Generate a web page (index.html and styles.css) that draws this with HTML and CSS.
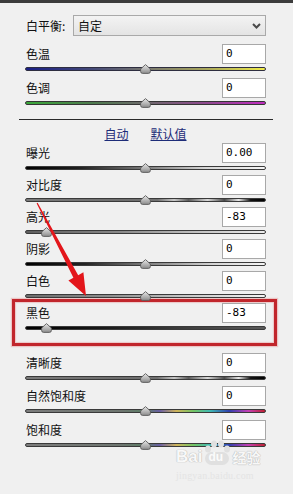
FILE: index.html
```html
<!DOCTYPE html>
<html lang="zh-CN">
<head>
<meta charset="utf-8">
<title>基本</title>
<link rel="stylesheet" href="styles.css">
</head>
<body>
<svg class="defs" width="0" height="0" aria-hidden="true">
  <defs>
    <linearGradient id="tg" x1="0" y1="0" x2="0" y2="1">
      <stop offset="0" stop-color="#e8e8e8"/>
      <stop offset="1" stop-color="#8c8c8c"/>
    </linearGradient>
    <symbol id="thumb" viewBox="0 0 11 10">
      <path d="M5.5 0.6 L10.4 5 V7.4 Q10.4 9.4 8.4 9.4 H2.6 Q0.6 9.4 0.6 7.4 V5 Z" fill="url(#tg)" stroke="#5a5a5a" stroke-width="0.9"/>
    </symbol>
  </defs>
</svg>
<div class="panel">
  <div class="topbar"></div>
  <div class="content">
    <div class="wb">
      <span class="wb-label">白平衡:</span>
      <div class="select">
        <span>自定</span>
        <svg class="chev" width="9" height="6" viewBox="0 0 9 6"><path d="M1 1 L4.5 4.5 L8 1" fill="none" stroke="#4a4a4a" stroke-width="2"/></svg>
      </div>
    </div>

    <div class="row first">
      <div class="head"><span class="label">色温</span><span class="input">0</span></div>
      <div class="track t-temp"><svg class="thumb" style="left:50%"><use href="#thumb"/></svg></div>
    </div>
    <div class="row wide">
      <div class="head"><span class="label">色调</span><span class="input">0</span></div>
      <div class="track t-tint"><svg class="thumb" style="left:50%"><use href="#thumb"/></svg></div>
    </div>

    <div class="sep"></div>
    <div class="links"><a>自动</a><a>默认值</a></div>

    <div class="row tight">
      <div class="head"><span class="label">曝光</span><span class="input">0.00</span></div>
      <div class="track t-exp"><svg class="thumb" style="left:50%"><use href="#thumb"/></svg></div>
    </div>
    <div class="row">
      <div class="head"><span class="label">对比度</span><span class="input">0</span></div>
      <div class="track t-con"><svg class="thumb" style="left:50%"><use href="#thumb"/></svg></div>
    </div>
    <div class="row">
      <div class="head"><span class="label">高光</span><span class="input">-83</span></div>
      <div class="track t-hi"><svg class="thumb" style="left:8.5%"><use href="#thumb"/></svg></div>
    </div>
    <div class="row">
      <div class="head"><span class="label">阴影</span><span class="input">0</span></div>
      <div class="track t-sh"><svg class="thumb" style="left:50%"><use href="#thumb"/></svg></div>
    </div>
    <div class="row">
      <div class="head"><span class="label">白色</span><span class="input">0</span></div>
      <div class="track t-wh"><svg class="thumb" style="left:50%"><use href="#thumb"/></svg></div>
    </div>

    <div class="hl">
      <div class="row flush">
        <div class="head"><span class="label">黑色</span><span class="input">-83</span></div>
        <div class="track t-bl"><svg class="thumb" style="left:8.5%"><use href="#thumb"/></svg></div>
      </div>
    </div>

    <div class="row after">
      <div class="head"><span class="label">清晰度</span><span class="input">0</span></div>
      <div class="track t-con"><svg class="thumb" style="left:50%"><use href="#thumb"/></svg></div>
    </div>
    <div class="row mid">
      <div class="head"><span class="label">自然饱和度</span><span class="input">0</span></div>
      <div class="track t-vib"><svg class="thumb" style="left:50%"><use href="#thumb"/></svg></div>
    </div>
    <div class="row after">
      <div class="head"><span class="label">饱和度</span><span class="input">0</span></div>
      <div class="track t-sat"><svg class="thumb" style="left:50%"><use href="#thumb"/></svg></div>
    </div>
  </div>

  <svg class="arrow" width="293" height="494" viewBox="0 0 293 494" aria-hidden="true">
    <polygon points="36.6,203.2 37.6,202.8 78.2,275.2 83.4,272.2 86,296 68.4,280.6 73.4,277.8" fill="#e3161b"/>
  </svg>

  <div class="watermark" aria-hidden="true">
    <div class="wm-top">
      <span class="wm-bai">Bai</span>
      <span class="wm-paw">
        <svg width="30" height="26" viewBox="0 0 30 26">
          <ellipse cx="6" cy="9" rx="3" ry="3.6" fill="#e0e0e0"/>
          <ellipse cx="12" cy="4" rx="3" ry="3.6" fill="#e0e0e0"/>
          <ellipse cx="19" cy="4" rx="3" ry="3.6" fill="#e0e0e0"/>
          <ellipse cx="25" cy="9" rx="3" ry="3.6" fill="#e0e0e0"/>
          <rect x="3" y="12" width="24" height="13" rx="6.5" fill="#e0e0e0"/>
        </svg>
        <span class="wm-du">du</span>
      </span>
      <span class="wm-cn">经验</span>
    </div>
    <div class="wm-url">jingyan.baidu.com</div>
  </div>
</div>
</body>
</html>
```

FILE: styles.css
```css
html, body {
  margin: 0;
  padding: 0;
}
body {
  width: 293px;
  height: 494px;
  overflow: hidden;
  background: #f0f0f0;
  font-family: "Noto Sans CJK SC", "Noto Sans", sans-serif;
  color: #111;
}
.defs {
  position: absolute;
  width: 0;
  height: 0;
}
.panel {
  position: relative;
  width: 293px;
  height: 494px;
  background: #f0f0f0;
}
.topbar {
  height: 3px;
  background: #3c3c3c;
}
.content {
  margin-left: 25px;
  width: 241px;
}

/* white balance */
.wb {
  margin-top: 12px;
  height: 21px;
  display: grid;
  grid-template-columns: 48px 1fr;
  align-items: center;
}
.wb-label {
  font-size: 12px;
  line-height: 21px;
  padding-left: 1px;
}
.select {
  height: 21px;
  box-sizing: border-box;
  border: 1px solid #a9a9a9;
  background: linear-gradient(#f3f3f3, #e4e4e4);
  display: flex;
  align-items: center;
  justify-content: space-between;
  padding: 0 4px 0 4px;
  font-size: 12px;
  line-height: 19px;
}
.chev {
  display: block;
}

/* slider rows */
.row {
  margin-top: 5px;
}
.row.first { margin-top: 8px; }
.row.wide { margin-top: 7px; }
.row.tight { margin-top: 2px; }
.row.flush { margin-top: 0; }
.row.after { margin-top: 7px; }
.row.mid { margin-top: 6px; }

.head {
  height: 20px;
  display: flex;
  justify-content: space-between;
  align-items: center;
}
.label {
  font-size: 12px;
  line-height: 20px;
  padding-left: 1px;
}
.input {
  width: 44px;
  height: 20px;
  box-sizing: border-box;
  border: 1px solid #a8a8a8;
  background: #fff;
  font-family: "DejaVu Sans Mono", "Liberation Mono", monospace;
  font-size: 11px;
  line-height: 18px;
  padding-left: 3px;
  color: #000;
}
.track {
  position: relative;
  margin-top: 3px;
  height: 4px;
  box-sizing: border-box;
  border: 1px solid #3a3a3a;
  border-radius: 3px;
}
.thumb {
  position: absolute;
  top: -4px;
  width: 11px;
  height: 10px;
  margin-left: -5.5px;
  overflow: visible;
}

.t-temp { background: linear-gradient(to right, #1a1f86 0%, #454a78 28%, #77766e 50%, #a8a65c 75%, #f0ec48 100%); border-color: #2e2e40; }
.t-tint { background: linear-gradient(to right, #3aa83a 0%, #4e7a4e 28%, #6e6a6c 50%, #8e4a8e 75%, #c02cc0 100%); border-color: #353535; }
.t-exp  { background: linear-gradient(to right, #000 0%, #1e1e1e 22%, #7a7a7a 50%, #d6d6d6 75%, #f6f6f6 100%); }
.t-con  { background: linear-gradient(to right, #7a7a7a 0%, #6e6e6e 40%, #707070 55%, #c8c8c8 62%, #5a5a5a 68%, #d8d8d8 76%, #4a4a4a 83%, #e8e8e8 89%, #111 94%, #000 100%); }
.t-hi   { background: linear-gradient(to right, #5e5e5e 0%, #8a8a8a 40%, #c8c8c8 75%, #ececec 100%); }
.t-sh   { background: linear-gradient(to right, #000 0%, #242424 25%, #7c7c7c 50%, #d4d4d4 78%, #f4f4f4 100%); }
.t-wh   { background: linear-gradient(to right, #6c6c6c 0%, #8e8e8e 35%, #c4c4c4 65%, #f4f4f4 100%); }
.t-bl   { background: linear-gradient(to right, #000 0%, #161616 30%, #3c3c3c 65%, #5a5a5a 100%); }
.t-vib, .t-sat {
  background: linear-gradient(to right, #7c7c7c 0%, #6e7670 40%, #5c7e66 50%, #6a5ea4 56%, #cfb45a 63%, #74c464 70%, #3fbab4 77%, #2f3fae 85%, #c440b4 93%, #bf2030 100%);
  border-color: #3a3a3a;
}

/* separator + links */
.sep {
  margin: 14px 0 0 -6px;
  width: 254px;
  height: 1px;
  background: #2a2a2a;
}
.links {
  margin-top: 7px;
  height: 14px;
  display: flex;
  justify-content: center;
  gap: 22px;
  font-size: 12px;
  line-height: 14px;
}
.links a {
  color: #1d2c78;
  text-decoration: underline;
  text-underline-offset: 1px;
}

/* highlight box */
.hl {
  margin: 1px -11px 0 -13px;
  padding: 1px 8px 13px 10px;
  border: 3px solid #c1262c;
  box-shadow: 0 0 1px 1px rgba(230, 120, 120, 0.35), inset 0 0 1px 1px rgba(230, 120, 120, 0.35);
}

/* annotation arrow */
.arrow {
  position: absolute;
  left: 0;
  top: 0;
  pointer-events: none;
}

/* watermark */
.watermark {
  position: absolute;
  left: 176px;
  top: 440px;
  width: 90px;
}
.wm-top {
  display: flex;
  align-items: flex-end;
  height: 26px;
}
.wm-bai {
  font-family: "Liberation Sans", sans-serif;
  font-weight: bold;
  font-size: 17px;
  line-height: 18px;
  color: #f8f8f8;
  text-shadow: 0 0 1px #b4b4b4, 0 0 1px #b4b4b4;
}
.wm-paw {
  position: relative;
  width: 30px;
  height: 26px;
}
.wm-paw svg {
  display: block;
}
.wm-du {
  position: absolute;
  left: 6px;
  top: 11px;
  font-family: "Liberation Sans", sans-serif;
  font-weight: bold;
  font-size: 12px;
  line-height: 13px;
  color: #fbfbfb;
}
.wm-cn {
  font-weight: bold;
  font-size: 14px;
  line-height: 17px;
  color: #f8f8f8;
  text-shadow: 0 0 1px #b4b4b4, 0 0 1px #b4b4b4;
}
.wm-url {
  margin-top: 5px;
  font-family: "Liberation Serif", serif;
  font-size: 10px;
  line-height: 10px;
  color: #e4e4e4;
  letter-spacing: 0.2px;
}
```
